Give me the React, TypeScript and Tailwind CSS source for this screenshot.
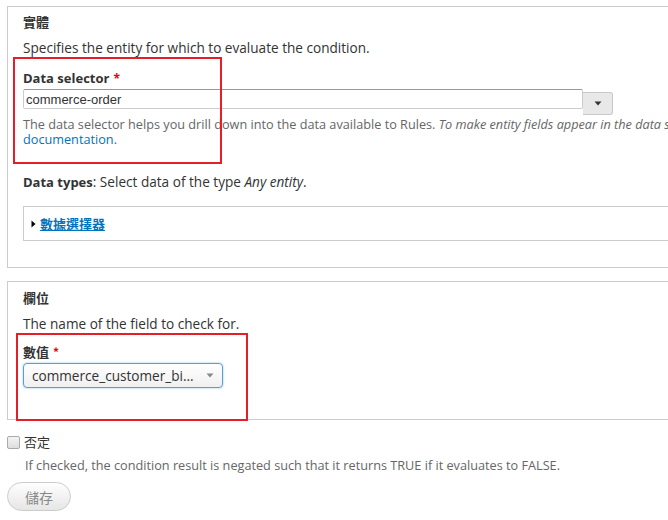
import React from 'react';

const body = "font-['Open_Sans','Noto_Sans_CJK_TC',sans-serif]";

const Asterisk = () => <span className="ml-[4px] text-[12px] font-bold text-[#e00]">*</span>;

const App: React.FC = () => {
  return (
    <div className={`relative h-[520px] w-[668px] overflow-hidden bg-white text-[13.6px] leading-[18px] text-[#333] ${body}`}>
      {/* 實體 fieldset */}
      <div className="ml-[7px] mt-[6px] w-[720px] border border-[#ccc] px-[15px] pb-[26px] pt-[6px]">
        <h3 className="text-[13px] font-bold font-['Noto_Sans_CJK_TC',sans-serif]">實體</h3>
        <p className="mt-[8px]">Specifies the entity for which to evaluate the condition.</p>

        <label className="mt-[12px] block text-[13px] font-bold">
          Data selector<Asterisk />
        </label>
        <div className="mt-[1px] flex h-[20px] items-start">
          <input
            readOnly
            value="commerce-order"
            className="h-[20px] w-[560px] rounded-[2px] border border-[#ccc] border-t-[#999] px-[2px] font-['Liberation_Sans',sans-serif] text-[13px] text-[#333] outline-none"
          />
          <button className="mt-[3px] flex h-[23px] w-[30px] shrink-0 items-center justify-center rounded-r-[3px] border border-l-0 border-[#c8c8c8] bg-[#e8e8e8]">
            <svg width="8" height="5" viewBox="0 0 8 5">
              <path d="M0.5 0.5h7L4 4.5z" fill="#333" />
            </svg>
          </button>
        </div>
        <p className="mt-[8px] whitespace-nowrap text-[12.7px] leading-[15px] text-[#666]">
          The data selector helps you drill down into the data available to Rules.{' '}
          <em>To make entity fields appear in the data selector, you may have to use the condition 'entity has field' (or 'content is of type'). More useful tips are in the online</em>
          <br />
          <a className="text-[#0074bd]">documentation</a>.
        </p>

        <p className="mt-[26px]">
          <strong className="text-[13px]">Data types</strong>: Select data of the type <em>Any entity</em>.
        </p>

        <div className="mt-[15px] border border-[#ccc] px-[7px] pb-[7px] pt-[8px]">
          <a className="flex items-center text-[13px] font-bold text-[#0074bd] underline font-['Noto_Sans_CJK_TC',sans-serif]">
            <svg width="5" height="8" viewBox="0 0 5 8" className="mr-[4px]">
              <path d="M0.5 0.5v7L4.5 4z" fill="#000" />
            </svg>
            數據選擇器
          </a>
        </div>
      </div>

      {/* 欄位 fieldset */}
      <div className="ml-[7px] mt-[13px] w-[720px] border border-[#ccc] px-[15px] pb-[31px] pt-[7px]">
        <h3 className="text-[13px] font-bold font-['Noto_Sans_CJK_TC',sans-serif]">欄位</h3>
        <p className="mt-[8px]">The name of the field to check for.</p>
        <label className="mt-[10px] block text-[13px] font-bold font-['Noto_Sans_CJK_TC',sans-serif]">
          數值<Asterisk />
        </label>
        <div className="mt-[2px] flex h-[25px] w-[200px] items-center justify-between rounded-[4px] border border-[#5b9dd9] bg-gradient-to-b from-white to-[#f0f0f0] pl-[8px] pr-[8px] shadow-[0_0_2px_rgba(30,140,190,0.6)]">
          <span>commerce_customer_bi...</span>
          <svg width="8" height="5" viewBox="0 0 8 5">
            <path d="M0.5 0.5h7L4 4.5z" fill="#888" />
          </svg>
        </div>
      </div>

      {/* 否定 */}
      <div className="ml-[7px] mt-[13px] flex items-center">
        <span className="h-[13px] w-[13px] rounded-[2px] border border-[#aaa] bg-gradient-to-b from-[#f4f4f4] to-[#ddd]" />
        <span className="ml-[4px] text-[13px] font-['Noto_Sans_CJK_TC',sans-serif]">否定</span>
      </div>
      <p className="ml-[25px] mt-[7px] text-[12.7px] leading-[15px] text-[#666]">
        If checked, the condition result is negated such that it returns TRUE if it evaluates to FALSE.
      </p>

      <button className="ml-[7px] mt-[9px] h-[29px] w-[64px] rounded-[15px] border border-[#ccc] bg-gradient-to-b from-[#fefefe] to-[#e6e6e6] text-[14px] text-[#888] font-['Noto_Sans_CJK_TC',sans-serif]">
        儲存
      </button>

      {/* red annotation boxes */}
      <div className="pointer-events-none absolute left-[13px] top-[57px] h-[107px] w-[209px] border-2 border-[#e61e28]" />
      <div className="pointer-events-none absolute left-[16px] top-[333px] h-[88px] w-[232px] border-2 border-[#e61e28]" />
    </div>
  );
};

export default App;
